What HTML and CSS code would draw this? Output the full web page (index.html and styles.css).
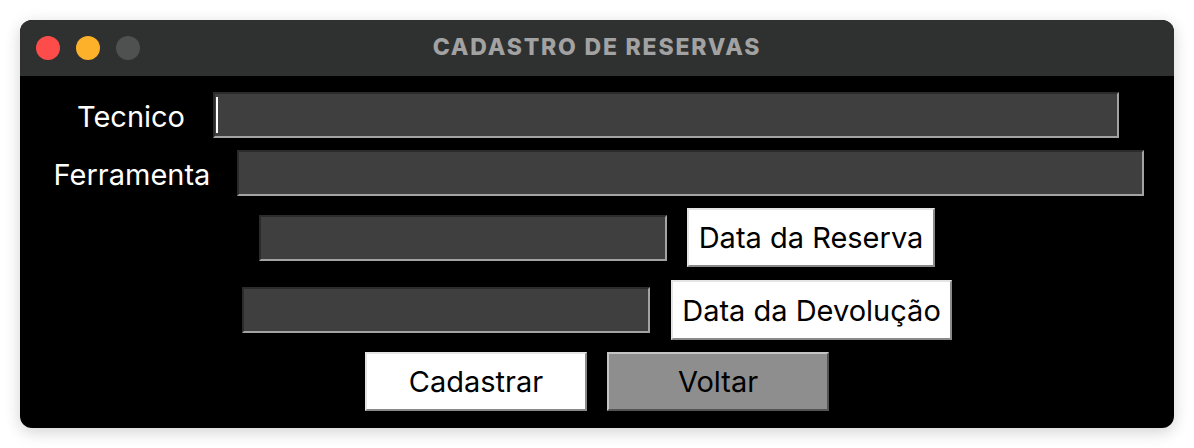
FILE: index.html
```html
<!DOCTYPE html>
<html lang="pt-BR">
<head>
  <meta charset="UTF-8">
  <title>Cadastro de Reservas</title>
  <link rel="stylesheet" href="styles.css">
</head>
<body>
  <!-- Janela -->
  <div class="window">
    <div class="titlebar">
      <div class="lights">
        <span class="light red"></span>
        <span class="light yellow"></span>
        <span class="light gray"></span>
      </div>
      <div class="title">CADASTRO DE RESERVAS</div>
      <div></div>
    </div>

    <!-- Formulario -->
    <div class="content">
      <div class="row row-tecnico">
        <label class="label" for="tecnico">Tecnico</label>
        <div class="entry entry-long focused"><span class="cursor"></span></div>
      </div>

      <div class="row row-ferramenta">
        <label class="label" for="ferramenta">Ferramenta</label>
        <div class="entry entry-long"></div>
      </div>

      <div class="row row-reserva">
        <div class="entry entry-short"></div>
        <button class="btn btn-reserva">Data da Reserva</button>
      </div>

      <div class="row row-devolucao">
        <div class="entry entry-short"></div>
        <button class="btn btn-devolucao">Data da Devolução</button>
      </div>

      <div class="row row-actions">
        <button class="btn btn-action">Cadastrar</button>
        <button class="btn btn-action btn-gray">Voltar</button>
      </div>
    </div>
  </div>
</body>
</html>
```

FILE: styles.css
```css
* {
  box-sizing: border-box;
}

html, body {
  margin: 0;
  padding: 0;
}

body {
  background: #ffffff;
  padding: 20px;
  font-family: Inter, "Noto Sans", sans-serif;
}

/* Janela */
.window {
  width: 1154px;
  height: 408px;
  border-radius: 12px;
  overflow: hidden;
  background: #000000;
  box-shadow: 0 4px 16px rgba(0, 0, 0, 0.18);
}

.titlebar {
  height: 56px;
  background: #2f3030;
  display: grid;
  grid-template-columns: 1fr auto 1fr;
  align-items: center;
}

.lights {
  display: flex;
  gap: 16px;
  padding-left: 16px;
}

.light {
  width: 24px;
  height: 24px;
  border-radius: 50%;
}

.red { background: #fe4c4a; }
.yellow { background: #fdb12a; }
.gray { background: #4f5150; }

.title {
  color: #a2a2a2;
  font-weight: 800;
  font-size: 23px;
  letter-spacing: 1.8px;
  padding-bottom: 3px;
}

/* Conteudo */
.content {
  display: flex;
  flex-direction: column;
  align-items: center;
  padding-top: 16px;
}

.row {
  display: flex;
  align-items: center;
  justify-content: center;
}

.row-tecnico { padding-left: 2px; }
.row-ferramenta { margin-top: 12px; padding-left: 4px; }
.row-reserva { margin-top: 12px; gap: 20px; }
.row-devolucao { margin-top: 13px; gap: 21px; }
.row-actions { margin-top: 12px; gap: 20px; }

.label {
  color: #ffffff;
  font-size: 29px;
  padding-top: 2px;
}

.row-tecnico .label { margin-right: 28px; }
.row-ferramenta .label { margin-right: 27px; }

.entry {
  height: 46px;
  background: #3f3f3f;
  border: 2px solid;
  border-color: #2b2b2b #a3a3a3 #a3a3a3 #2b2b2b;
  position: relative;
}

.entry-long { width: 907px; }
.row-tecnico .entry-long { width: 906px; }
.entry-short { width: 408px; }

.cursor {
  position: absolute;
  left: 1px;
  top: 3px;
  width: 2px;
  height: 36px;
  background: #ffffff;
}

.btn {
  font-family: inherit;
  font-size: 29px;
  color: #000000;
  background: #ffffff;
  border: 2px solid;
  border-color: #e4e4e4 #8a8a8a #8a8a8a #e4e4e4;
  padding: 0;
  height: 59px;
}

.btn-reserva { width: 248px; }
.btn-devolucao { width: 281px; height: 60px; }
.btn-action { width: 222px; }

.btn-gray {
  background: #8e8e8e;
  border-color: #c4c4c4 #545454 #545454 #c4c4c4;
}
```
